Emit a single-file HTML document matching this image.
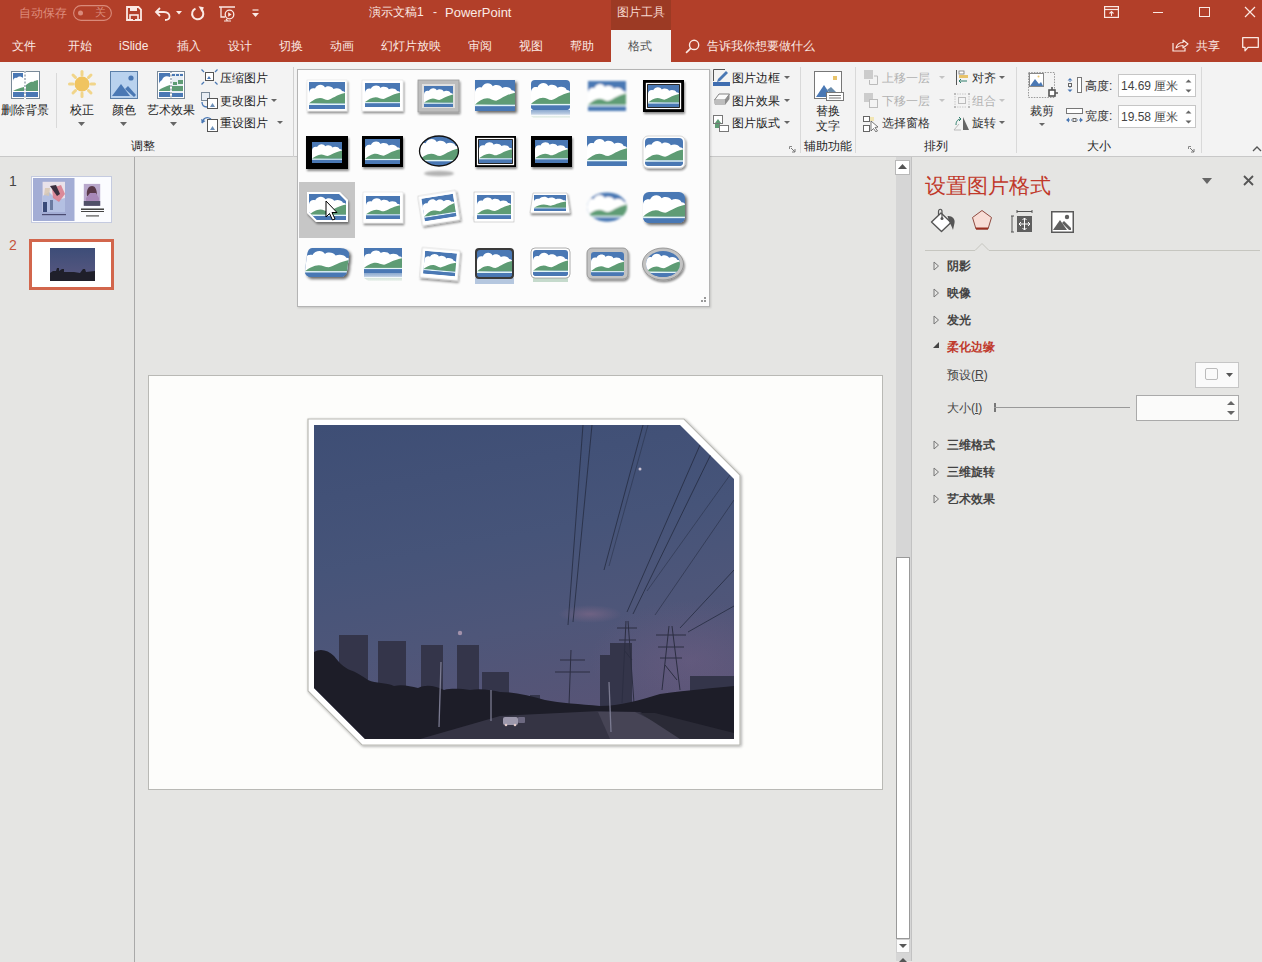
<!DOCTYPE html>
<html><head><meta charset="utf-8">
<style>
*{margin:0;padding:0;box-sizing:border-box}
html,body{width:1262px;height:962px;overflow:hidden;background:#e5e5e3}
body{font-family:"Liberation Sans",sans-serif;font-size:12px;color:#444;position:relative}
.a{position:absolute}
.t{position:absolute;white-space:nowrap;line-height:1}
#title{left:0;top:0;width:1262px;height:62px;background:#b23f29}
#ctx{left:611px;top:0;width:60px;height:30px;background:#9c3a24}
#seltab{left:611px;top:30px;width:60px;height:32px;background:#f3f3f3}
#ribbon{left:0;top:62px;width:1262px;height:95px;background:#f3f3f3;border-bottom:1px solid #c8c8c8}
.tab{color:#fbe9e4;font-size:12px;top:40px}
.rb{color:#1e1e1e;font-size:12px}
.sep{position:absolute;width:1px;background:#d9d9d9}
.gl{color:#1e1e1e;font-size:12px;top:140px}
#leftpane{left:0;top:157px;width:135px;height:805px;background:#e5e5e3;border-right:1px solid #a9a9a9}
#slide{left:149px;top:376px;width:733px;height:413px;background:#fdfdfb;box-shadow:0 0 0 1px #b9b9b5}
#vscroll{left:896px;top:157px;width:16px;height:804px;background:#d6d6d6;border-right:1px solid #c2c2c2}
#rpane{left:912px;top:157px;width:350px;height:805px;background:#e5e5e3}
#gallery{left:297px;top:69px;width:413px;height:238px;background:#fcfcfc;border:1px solid #b4b4b4;box-shadow:1px 1px 2px rgba(0,0,0,.15)}
.sec{font-weight:bold;color:#444;font-size:12px;left:947px}
.tri{position:absolute;left:934px;width:0;height:0;border-top:4px solid transparent;border-bottom:4px solid transparent;border-left:5px solid #777}
.tri::after{content:"";position:absolute;left:-4px;top:-2px;border-top:2px solid transparent;border-bottom:2px solid transparent;border-left:2.5px solid #e6e6e6}
</style></head><body>

<!-- title bar -->
<div id="title" class="a"></div>
<div id="ctx" class="a"></div>
<div id="seltab" class="a"></div>
<div class="t" style="left:19px;top:7px;color:#dd8c7c;font-size:12px">自动保存</div>
<div class="t" style="left:369px;top:6px;color:#fbe9e4;font-size:12px">演示文稿1</div><div class="t" style="left:433px;top:6px;color:#fbe9e4;font-size:12px">-</div><div class="t" style="left:445px;top:6px;color:#fbe9e4;font-size:13px">PowerPoint</div>
<div class="t" style="left:617px;top:6px;color:#f6d8d0;font-size:12px">图片工具</div>

<svg class="a" style="left:73px;top:5px" width="39" height="16" viewBox="0 0 39 16">
<rect x="0.6" y="0.6" width="37.8" height="14.8" rx="7.4" fill="none" stroke="#d98a7a" stroke-width="1.1"/>
<circle cx="7.5" cy="8" r="2.5" fill="#d98a7a"/>
</svg>
<div class="t" style="left:95px;top:7px;color:#d98a7a;font-size:11px">关</div>
<svg class="a" style="left:126px;top:6px" width="16" height="15" viewBox="0 0 16 15">
<path d="M1 1 H12.5 L15 3.5 V14 H1Z" fill="none" stroke="#fbe9e4" stroke-width="1.8"/>
<rect x="4" y="1" width="7" height="4" fill="#fbe9e4"/>
<rect x="4" y="9" width="8" height="5" fill="none" stroke="#fbe9e4" stroke-width="1.6"/>
<rect x="7" y="10" width="2" height="4" fill="#b23f29"/>
</svg>
<svg class="a" style="left:154px;top:6px" width="17" height="15" viewBox="0 0 17 15">
<path d="M2 6 H10 C14 6 15.5 8.5 15.5 10.5 C15.5 12.5 14 14 11 14" fill="none" stroke="#fbe9e4" stroke-width="1.8"/>
<path d="M6 2 L2 6 L6 10" fill="none" stroke="#fbe9e4" stroke-width="1.8"/>
</svg>
<svg class="a" style="left:176px;top:11px" width="6" height="4"><path d="M0 0 H6 L3 3.5Z" fill="#fbe9e4"/></svg>
<svg class="a" style="left:190px;top:6px" width="15" height="15" viewBox="0 0 15 15">
<path d="M5.5 2.6 A5.6 5.6 0 1 0 11.5 3.6" fill="none" stroke="#fbe9e4" stroke-width="2"/>
<path d="M8.5 0.2 L13.8 1.2 L12.2 6.5Z" fill="#fbe9e4"/>
</svg>
<svg class="a" style="left:219px;top:6px" width="17" height="16" viewBox="0 0 17 16">
<path d="M0 1 H16" stroke="#fbe9e4" stroke-width="1.5"/>
<path d="M2 1 V11 H6" stroke="#fbe9e4" stroke-width="1.3" fill="none"/>
<circle cx="10.5" cy="8.5" r="4.3" fill="none" stroke="#fbe9e4" stroke-width="1.3"/>
<path d="M9.2 6.3 V10.7 L12.6 8.5Z" fill="#fbe9e4"/>
<path d="M5 15 H12 M7 13 L8.5 14.5" stroke="#fbe9e4" stroke-width="1.1"/>
</svg>
<svg class="a" style="left:252px;top:9px" width="7" height="9" viewBox="0 0 7 9"><path d="M0.5 1 H6.5" stroke="#fbe9e4" stroke-width="1.2"/><path d="M0 4 H7 L3.5 8Z" fill="#fbe9e4"/></svg>
<svg class="a" style="left:1104px;top:6px" width="15" height="12" viewBox="0 0 15 12">
<rect x="0.6" y="0.6" width="13.8" height="10.8" fill="none" stroke="#fbe9e4" stroke-width="1.2"/>
<path d="M0.6 3.5 H14.4" stroke="#fbe9e4" stroke-width="1.2"/>
<path d="M7.5 10 V5.5 M5.5 7.5 L7.5 5.5 L9.5 7.5" stroke="#fbe9e4" fill="none" stroke-width="1.1"/>
</svg>
<div class="a" style="left:1153px;top:12px;width:10px;height:1.3px;background:#fbe9e4"></div>
<div class="a" style="left:1199px;top:7px;width:11px;height:10px;border:1.2px solid #fbe9e4"></div>
<svg class="a" style="left:1244px;top:6px" width="12" height="12"><path d="M1 1 L11 11 M11 1 L1 11" stroke="#fbe9e4" stroke-width="1.2"/></svg>
<svg class="a" style="left:1172px;top:37px" width="17" height="15" viewBox="0 0 17 15">
<path d="M1 6 V14 H13 V11" fill="none" stroke="#fbe9e4" stroke-width="1.2"/>
<path d="M4 11 C5 7 8 5.5 11 5.5 V3 L16 7 L11 11 V8.5 C8 8.5 6 9.5 4 11Z" fill="none" stroke="#fbe9e4" stroke-width="1.1" stroke-linejoin="round"/>
</svg>
<svg class="a" style="left:1242px;top:37px" width="17" height="15" viewBox="0 0 17 15">
<path d="M0.7 0.7 H16.3 V10.3 H6 L3 13.8 V10.3 H0.7Z" fill="none" stroke="#fbe9e4" stroke-width="1.3" stroke-linejoin="round"/>
</svg>
<svg class="a" style="left:685px;top:39px" width="15" height="15" viewBox="0 0 14 14">
<circle cx="8.5" cy="5.5" r="4.3" fill="none" stroke="#fbe9e4" stroke-width="1.3"/>
<path d="M5.5 8.5 L1 13" stroke="#fbe9e4" stroke-width="1.5"/>
</svg>
<!-- tabs -->
<div class="t tab" style="left:12px">文件</div>
<div class="t tab" style="left:68px">开始</div>
<div class="t tab" style="left:119px">iSlide</div>
<div class="t tab" style="left:177px">插入</div>
<div class="t tab" style="left:228px">设计</div>
<div class="t tab" style="left:279px">切换</div>
<div class="t tab" style="left:330px">动画</div>
<div class="t tab" style="left:381px">幻灯片放映</div>
<div class="t tab" style="left:468px">审阅</div>
<div class="t tab" style="left:519px">视图</div>
<div class="t tab" style="left:570px">帮助</div>
<div class="t tab" style="left:628px;color:#555">格式</div>
<div class="t tab" style="left:707px">告诉我你想要做什么</div>
<div class="t tab" style="left:1196px">共享</div>

<!-- ribbon -->
<div id="ribbon" class="a"></div>
<svg width="0" height="0" style="position:absolute">
<defs>
<symbol id="pic" viewBox="0 0 36 27" preserveAspectRatio="none">
<rect width="36" height="27" fill="#4a78b4"/>
<path d="M0,11 C0,7.5 3,5.5 6,6.5 C8,2 14,1.5 16,5.5 C18,3.5 23,4 24.5,7 C27,5.5 32,6 33,9 C35,9 36,10 36,11 L36,20 L0,22 Z" fill="#fff"/>
<path d="M0,21.5 C3,19 7,16 11,16 C14,16 16,18 19,18 C23,17 27,13 36,11 L36,21.5 Z" fill="#5e9c74"/>
<rect y="21.5" width="36" height="1.5" fill="#e3f5f7"/>
<rect y="23" width="36" height="4" fill="#4a78b4"/>
</symbol>
</defs>
</svg>
<!-- group 调整 -->
<svg class="a" style="left:11px;top:71px" width="29" height="28" viewBox="0 0 29 28">
<rect x="0.5" y="0.5" width="28" height="27" fill="#fff" stroke="#7a8a99"/>
<rect x="2" y="2" width="25" height="24" fill="#fff"/>
<path d="M2,2 H12 V7 C10,5 7,5 6,7 C4,6 2,8 2,10 Z" fill="#4a78b4"/>
<path d="M15,20 L15,14 C18,12 20,10 22,11 C24,9 25,10 27,9 V20 Z" fill="#5e9c74"/>
<path d="M2,20 C5,18 9,17 13,16 V20 Z" fill="#5e9c74"/>
<rect x="2" y="21" width="25" height="5" fill="#4a78b4"/>
<path d="M14 0 V28" stroke="#fff" stroke-width="2"/>
<path d="M14 0 V28" stroke="#6b7b8c" stroke-width="1" stroke-dasharray="2 1.5"/>
</svg>
<div class="t rb" style="left:1px;top:104px">删除背景</div>
<div class="sep" style="left:56px;top:73px;height:55px"></div>
<svg class="a" style="left:68px;top:70px" width="28" height="28" viewBox="0 0 28 28">
<g stroke="#f1d58a" stroke-width="3" stroke-linecap="round">
<path d="M14 1.5 V5"/><path d="M14 23 V26.5"/><path d="M1.5 14 H5"/><path d="M23 14 H26.5"/>
<path d="M5 5 L7.5 7.5"/><path d="M20.5 20.5 L23 23"/><path d="M23 5 L20.5 7.5"/><path d="M5 23 L7.5 20.5"/>
</g>
<circle cx="14" cy="14" r="7.5" fill="#f0c460"/>
</svg>
<div class="t rb" style="left:70px;top:104px">校正</div>
<svg class="a" style="left:78px;top:122px" width="7" height="4"><path d="M0 0 H7 L3.5 4Z" fill="#666"/></svg>
<svg class="a" style="left:110px;top:71px" width="28" height="28" viewBox="0 0 28 28">
<rect x="0.5" y="0.5" width="27" height="27" fill="#b9d2ee" stroke="#5b7fa8"/>
<circle cx="21" cy="7" r="2.6" fill="#4a78b4"/>
<path d="M2,25 L11,13 L20,25 Z" fill="#4a78b4"/>
<path d="M15,18 L18,15 L26,24 L24,26 Z" fill="#4a78b4"/>
</svg>
<div class="t rb" style="left:112px;top:104px">颜色</div>
<svg class="a" style="left:120px;top:122px" width="7" height="4"><path d="M0 0 H7 L3.5 4Z" fill="#666"/></svg>
<svg class="a" style="left:157px;top:71px" width="28" height="28" viewBox="0 0 28 28">
<rect x="0.5" y="0.5" width="27" height="27" fill="#fff" stroke="#7a8a99"/>
<path d="M2,2 H13 V6 C9,4 6,6 5,9 C3,10 2,12 2,13 Z" fill="#4a78b4"/>
<path d="M2,19 C5,17 9,15 13,14 V20 H2 Z" fill="#5e9c74"/>
<rect x="2" y="21" width="11" height="5" fill="#4a78b4"/>
<rect x="15" y="2" width="11" height="24" fill="#e8eef3"/>
<g fill="#4a78b4"><rect x="15" y="3" width="3" height="2"/><rect x="19" y="3" width="3" height="2"/><rect x="23" y="3" width="3" height="2"/><rect x="15" y="22" width="11" height="4"/></g>
<g fill="#5e9c74"><rect x="16" y="11" width="4" height="3"/><rect x="21" y="9" width="5" height="4"/><rect x="15" y="15" width="11" height="5"/></g>
<path d="M14 0 V28" stroke="#6b7b8c" stroke-width="1" stroke-dasharray="2 1.5"/>
</svg>
<div class="t rb" style="left:147px;top:104px">艺术效果</div>
<svg class="a" style="left:170px;top:122px" width="7" height="4"><path d="M0 0 H7 L3.5 4Z" fill="#666"/></svg>
<!-- small buttons -->
<svg class="a" style="left:201px;top:69px" width="17" height="16" viewBox="0 0 17 16">
<rect x="4.5" y="3.5" width="8" height="8" fill="#fff" stroke="#555"/>
<path d="M6 10 L8 7 L10 10Z" fill="#4a78b4"/>
<g stroke="#4a78b4" stroke-width="1.2"><path d="M0.5 0.5 L3 3"/><path d="M16.5 0.5 L14 3"/><path d="M0.5 15.5 L3 13"/><path d="M16.5 15.5 L14 13"/></g>
</svg>
<div class="t rb" style="left:220px;top:72px">压缩图片</div>
<svg class="a" style="left:201px;top:92px" width="17" height="17" viewBox="0 0 17 17">
<rect x="0.5" y="0.5" width="8" height="8" fill="#e9eef4" stroke="#7a8a99"/>
<rect x="6.5" y="6.5" width="10" height="10" fill="#fff" stroke="#555"/>
<path d="M9 15 L11.5 11 L14 15Z" fill="#6c8fb8"/>
<path d="M1 10 C1 14 3 15 6 15" stroke="#4a78b4" fill="none" stroke-width="1.3"/>
</svg>
<div class="t rb" style="left:220px;top:95px">更改图片</div>
<svg class="a" style="left:271px;top:99px" width="6" height="3"><path d="M0 0 H6 L3 3Z" fill="#666"/></svg>
<svg class="a" style="left:201px;top:115px" width="17" height="17" viewBox="0 0 17 17">
<rect x="6.5" y="4.5" width="10" height="12" fill="#fff" stroke="#555"/>
<path d="M9 15 L11.5 11 L14 15Z" fill="#6c8fb8"/>
<path d="M1 8 C2 3 6 1 10 4" stroke="#4a78b4" fill="none" stroke-width="1.3"/>
<path d="M0 4 L1 8.5 L4.5 6Z" fill="#4a78b4"/>
</svg>
<div class="t rb" style="left:220px;top:117px">重设图片</div>
<svg class="a" style="left:277px;top:121px" width="6" height="3"><path d="M0 0 H6 L3 3Z" fill="#666"/></svg>
<div class="t gl" style="left:131px">调整</div>
<div class="sep" style="left:293px;top:67px;height:90px;background:#d0d0d0"></div>

<!-- 图片样式 right part -->
<svg class="a" style="left:713px;top:69px" width="17" height="17" viewBox="0 0 17 17">
<path d="M0.5 12 V0.5 H12" stroke="#555" fill="none"/>
<path d="M5 10 L13 2 L15 4 L7 12 L4 13Z" fill="#4a78b4"/>
<rect x="0" y="13" width="17" height="4" fill="#3f6db0"/>
</svg>
<div class="t rb" style="left:732px;top:72px">图片边框</div>
<svg class="a" style="left:784px;top:76px" width="6" height="3"><path d="M0 0 H6 L3 3Z" fill="#666"/></svg>
<svg class="a" style="left:713px;top:92px" width="18" height="15" viewBox="0 0 18 15">
<path d="M1.5 8 L6 2 H16.5 L12 8Z" fill="#fafafa" stroke="#777" stroke-width="0.9" stroke-linejoin="round"/>
<path d="M1.5 8 L12 8 L16.5 2 L16.5 7 L12 13 H3.5 Q1.5 13 1.5 11Z" fill="#8c8c8c"/>
<path d="M1.5 8 H12 V13 H3.5 Q1.5 13 1.5 11Z" fill="#bdbdbd"/>
</svg>
<div class="t rb" style="left:732px;top:95px">图片效果</div>
<svg class="a" style="left:784px;top:99px" width="6" height="3"><path d="M0 0 H6 L3 3Z" fill="#666"/></svg>
<svg class="a" style="left:713px;top:115px" width="16" height="17" viewBox="0 0 16 17">
<rect x="0.5" y="0.5" width="9" height="8" fill="#fff" stroke="#777"/>
<path d="M2 8 L5 4 L8 8Z" fill="#5e9c74"/>
<rect x="2" y="9" width="5" height="4" fill="#5e9c74"/>
<rect x="6.5" y="10.5" width="9" height="6" fill="#fff" stroke="#777"/>
</svg>
<div class="t rb" style="left:732px;top:117px">图片版式</div>
<svg class="a" style="left:784px;top:121px" width="6" height="3"><path d="M0 0 H6 L3 3Z" fill="#666"/></svg>
<svg class="a" style="left:789px;top:146px" width="7" height="7" viewBox="0 0 7 7"><path d="M0.5 3 V0.5 H3" stroke="#888" fill="none"/><path d="M2 2 L6 6 M6 3 V6 H3" stroke="#777" fill="none"/></svg>
<div class="sep" style="left:800px;top:67px;height:86px"></div>
<!-- 替换文字 -->
<svg class="a" style="left:814px;top:71px" width="30" height="30" viewBox="0 0 30 30">
<rect x="0.5" y="0.5" width="27" height="27" fill="#fff" stroke="#777"/>
<circ cx="21" cy="7" r="2"/>
<rect x="19" y="5" width="4" height="4" fill="#e8c36a"/>
<path d="M2,26 L10,14 L18,26Z" fill="#4a78b4"/>
<path d="M13,19 L17,16 L22,21 L20,26Z" fill="#6b8cab"/>
<rect x="12.5" y="21.5" width="17" height="8" fill="#fff" stroke="#777"/>
<path d="M15 24.5 H27 M15 27 H27" stroke="#777"/>
</svg>
<div class="t rb" style="left:816px;top:105px">替换</div>
<div class="t rb" style="left:816px;top:120px">文字</div>
<div class="t gl" style="left:804px">辅助功能</div>
<div class="sep" style="left:855px;top:67px;height:86px"></div>
<!-- 排列 -->
<svg class="a" style="left:864px;top:70px" width="14" height="15" viewBox="0 0 14 15">
<rect x="0" y="0" width="9" height="9" fill="#ccc"/>
<path d="M5.5 10 V14.5 H13.5 V6 H10" stroke="#bbb" fill="none"/>
</svg>
<div class="t rb" style="left:882px;top:72px;color:#b1b1b1">上移一层</div>
<svg class="a" style="left:939px;top:76px" width="6" height="3"><path d="M0 0 H6 L3 3Z" fill="#c4c4c4"/></svg>
<svg class="a" style="left:864px;top:93px" width="14" height="15" viewBox="0 0 14 15">
<rect x="0" y="0" width="9" height="9" fill="#ccc"/>
<rect x="5.5" y="6.5" width="8" height="8" fill="#f3f3f3" stroke="#bbb"/>
</svg>
<div class="t rb" style="left:882px;top:95px;color:#b1b1b1">下移一层</div>
<svg class="a" style="left:939px;top:99px" width="6" height="3"><path d="M0 0 H6 L3 3Z" fill="#c4c4c4"/></svg>
<svg class="a" style="left:863px;top:116px" width="16" height="16" viewBox="0 0 16 16">
<rect x="0.5" y="0.5" width="6" height="5" fill="#fff" stroke="#666"/>
<rect x="0.5" y="9.5" width="6" height="6" fill="#fff" stroke="#666"/>
<rect x="7" y="1" width="4" height="4" fill="#f2e6b4"/>
<path d="M8 5 L8 15 L10.5 12.5 L13 16 L14.5 15 L12 11.5 L15 11Z" fill="#fff" stroke="#555" stroke-width="0.8"/>
</svg>
<div class="t rb" style="left:882px;top:117px;color:#333">选择窗格</div>
<svg class="a" style="left:956px;top:70px" width="12" height="15" viewBox="0 0 12 15">
<path d="M0.5 0 V15" stroke="#555"/>
<rect x="3" y="1" width="5" height="3" fill="#fff" stroke="#777" stroke-width="0.8"/>
<rect x="3" y="5" width="9" height="3" fill="#e8c36a"/>
<path d="M11 11 H3 M5 9 L3 11 L5 13" stroke="#2e7d6b" fill="none"/>
</svg>
<div class="t rb" style="left:972px;top:72px;color:#333">对齐</div>
<svg class="a" style="left:999px;top:76px" width="6" height="3"><path d="M0 0 H6 L3 3Z" fill="#666"/></svg>
<svg class="a" style="left:954px;top:93px" width="16" height="15" viewBox="0 0 16 15">
<g fill="#bbb"><rect x="0" y="0" width="2" height="2"/><rect x="14" y="0" width="2" height="2"/><rect x="0" y="13" width="2" height="2"/><rect x="14" y="13" width="2" height="2"/></g>
<path d="M1 3 V12 M15 3 V12 M3 1 H13 M3 14 H13" stroke="#c8c8c8" stroke-dasharray="1.5 1"/>
<rect x="4.5" y="4.5" width="7" height="6" fill="none" stroke="#bbb"/>
</svg>
<div class="t rb" style="left:972px;top:95px;color:#b1b1b1">组合</div>
<svg class="a" style="left:999px;top:99px" width="6" height="3"><path d="M0 0 H6 L3 3Z" fill="#c4c4c4"/></svg>
<svg class="a" style="left:953px;top:116px" width="17" height="15" viewBox="0 0 17 15">
<path d="M10 1 L16 14 H10Z" fill="#666"/>
<path d="M1 14 L6 8" stroke="#bbb"/>
<path d="M3 9 C3 5 5 3 8 3 M6 1 L8 3 L6 5" stroke="#2e7d6b" fill="none"/>
<path d="M1 14 H8" stroke="#bbb"/>
</svg>
<div class="t rb" style="left:972px;top:117px;color:#333">旋转</div>
<svg class="a" style="left:999px;top:121px" width="6" height="3"><path d="M0 0 H6 L3 3Z" fill="#666"/></svg>
<div class="t gl" style="left:924px">排列</div>
<div class="sep" style="left:1016px;top:67px;height:86px"></div>
<!-- 大小 -->
<svg class="a" style="left:1028px;top:72px" width="31" height="28" viewBox="0 0 31 28">
<rect x="0.5" y="0.5" width="26" height="25" fill="none" stroke="#999" stroke-dasharray="1.5 1.2"/>
<rect x="1.5" y="1.5" width="14" height="13" fill="#fff" stroke="#888"/>
<path d="M2 14 L7 7 L11 12 L13 10 L15 14Z" fill="#4a78b4"/>
<circle cx="10.5" cy="4.5" r="1" fill="#e8c36a"/>
<rect x="21" y="18" width="6" height="6" fill="#fff" stroke="#555" stroke-width="1.6"/>
<path d="M24 15 V18 M30 21 H27" stroke="#555" stroke-width="1.6"/>
</svg>
<div class="t rb" style="left:1030px;top:105px;color:#333">裁剪</div>
<svg class="a" style="left:1039px;top:123px" width="6" height="3"><path d="M0 0 H6 L3 3Z" fill="#666"/></svg>
<svg class="a" style="left:1066px;top:77px" width="17" height="16" viewBox="0 0 17 16">
<path d="M4 1 L1.5 3.5 H6.5Z M4 15 L1.5 12.5 H6.5Z" fill="#4a78b4"/>
<path d="M4 4 V6 M4 10 V12" stroke="#4a78b4" stroke-dasharray="1 1"/>
<rect x="2.5" y="6.5" width="3" height="3" fill="none" stroke="#666"/>
<rect x="11.5" y="0.5" width="4" height="15" fill="#fff" stroke="#777"/>
</svg>
<div class="t rb" style="left:1085px;top:80px;color:#333">高度:</div>
<div class="a" style="left:1118px;top:74px;width:78px;height:23px;background:#fff;border:1px solid #c6c6c6"></div>
<div class="t rb" style="left:1121px;top:80px;color:#444;font-size:12px">14.69 厘米</div>
<svg class="a" style="left:1185px;top:79px" width="7" height="14"><path d="M0.5 3.5 L3.5 0.5 L6.5 3.5Z M0.5 10.5 L3.5 13.5 L6.5 10.5Z" fill="#666"/></svg>
<svg class="a" style="left:1066px;top:108px" width="17" height="17" viewBox="0 0 17 17">
<rect x="0.5" y="0.5" width="16" height="5" fill="#fff" stroke="#777"/>
<path d="M0 12 L3 9.5 V14.5Z M17 12 L14 9.5 V14.5Z" fill="#4a78b4"/>
<path d="M3 12 H6 M11 12 H14" stroke="#4a78b4" stroke-dasharray="1 1"/>
<rect x="7" y="10.5" width="3" height="3" fill="none" stroke="#666"/>
</svg>
<div class="t rb" style="left:1085px;top:110px;color:#333">宽度:</div>
<div class="a" style="left:1118px;top:105px;width:78px;height:23px;background:#fff;border:1px solid #c6c6c6"></div>
<div class="t rb" style="left:1121px;top:111px;color:#444;font-size:12px">19.58 厘米</div>
<svg class="a" style="left:1185px;top:110px" width="7" height="14"><path d="M0.5 3.5 L3.5 0.5 L6.5 3.5Z M0.5 10.5 L3.5 13.5 L6.5 10.5Z" fill="#666"/></svg>
<div class="t gl" style="left:1087px">大小</div>
<svg class="a" style="left:1188px;top:146px" width="7" height="7" viewBox="0 0 7 7"><path d="M0.5 3 V0.5 H3" stroke="#888" fill="none"/><path d="M2 2 L6 6 M6 3 V6 H3" stroke="#777" fill="none"/></svg>
<div class="sep" style="left:1201px;top:67px;height:86px"></div>
<svg class="a" style="left:1252px;top:146px" width="10" height="6"><path d="M1 5 L5 1 L9 5" stroke="#555" fill="none" stroke-width="1.3"/></svg>

<!-- left pane -->
<div id="leftpane" class="a"></div>
<div class="t" style="left:9px;top:174px;font-size:14px;color:#444">1</div>
<div class="t" style="left:9px;top:238px;font-size:14px;color:#c5533c">2</div>
<svg class="a" style="left:31px;top:176px" width="81" height="47" viewBox="0 0 81 47">
<rect x="0.5" y="0.5" width="80" height="46" fill="#fbfcff" stroke="#c5cbe0"/>
<rect x="2" y="2" width="41.5" height="43" fill="#a3add5"/>
<rect x="11.6" y="5.8" width="22.4" height="30.2" fill="#e9e2ea"/>
<path d="M11.6,20 L18,16 L26,24 L34,22 V36 H11.6Z" fill="#b4c0e2"/>
<path d="M21,12 L30,9 L34,18 L28,26 L22,22Z" fill="#d97f90" opacity="0.9"/>
<path d="M19,10 L25,9 L29,18 L26,20Z" fill="#3a2f3f"/>
<path d="M14,12 L19,12 L18,20 L13,19Z" fill="#d7c7b0" opacity="0.8"/>
<rect x="12" y="26" width="4" height="10" fill="#3a4a78"/>
<rect x="19" y="24" width="3" height="10" fill="#6a7aa0"/>
<rect x="11" y="38" width="24" height="1.2" fill="#4a4a70"/>
<rect x="52.8" y="7.9" width="16.4" height="21.9" fill="#b9a8cc"/>
<path d="M56,20 C55,13 58,10 61,10 C64,10 66,13 66,20Z" fill="#5a3a4a"/>
<path d="M55,22 L59,17 L65,17 L68,22 V29.8 H55Z" fill="#a888b8"/>
<rect x="52.8" y="25" width="16.4" height="4.8" fill="#505068"/>
<rect x="50" y="32.5" width="23" height="1.4" fill="#333"/>
<rect x="50" y="35" width="23" height="1" fill="#444"/>
<rect x="55" y="39.3" width="13" height="1.2" fill="#555"/>
</svg>
<div class="a" style="left:29px;top:239px;width:85px;height:51px;border:3px solid #d2664c;background:#fff"></div>
<svg class="a" style="left:50px;top:248px" width="45" height="33" viewBox="0 0 45 33">
<defs><linearGradient id="tsky" x1="0" y1="0" x2="0" y2="1"><stop offset="0" stop-color="#3d4d78"/><stop offset="1" stop-color="#5a5880"/></linearGradient></defs>
<rect width="45" height="33" fill="url(#tsky)"/>
<path d="M0,25 L3,23 L6,23 L7,20 L9,20 L9,23 L12,21 L14,21 L14,24 L24,24 L30,25 L33,21 L35,21 L36,24 L45,23 V33 H0Z" fill="#1f1f2a"/>
</svg>
<!-- slide -->
<div id="slide" class="a"></div>
<svg class="a" style="left:300px;top:411px" width="450" height="345" viewBox="300 411 450 345">
<defs>
<linearGradient id="sky" x1="0" y1="0" x2="0.25" y2="1">
<stop offset="0" stop-color="#3e4e75"/>
<stop offset="0.45" stop-color="#465479"/>
<stop offset="0.72" stop-color="#4e5679"/>
<stop offset="1" stop-color="#575476"/>
</linearGradient>
<radialGradient id="pink" cx="0.5" cy="0.5" r="0.5"><stop offset="0" stop-color="#9a7291" stop-opacity="0.7"/><stop offset="1" stop-color="#9a7291" stop-opacity="0"/></radialGradient>
<radialGradient id="purp" cx="0.5" cy="0.5" r="0.5"><stop offset="0" stop-color="#7a6288" stop-opacity="0.8"/><stop offset="1" stop-color="#7a6288" stop-opacity="0"/></radialGradient>
<clipPath id="photo"><path d="M314,425 H680 L734,479 V739 H365 L314,688Z"/></clipPath>
<filter id="fsh" x="-5%" y="-5%" width="110%" height="110%"><feGaussianBlur in="SourceAlpha" stdDeviation="1.5"/><feOffset dx="0.5" dy="1"/><feComponentTransfer><feFuncA type="linear" slope="0.35"/></feComponentTransfer><feMerge><feMergeNode/><feMergeNode in="SourceGraphic"/></feMerge></filter>
</defs>
<path d="M308,419 H684 L740,475 V745 H362 L308,691Z" fill="#fff" stroke="#b9b9b4" stroke-width="1.2" filter="url(#fsh)"/>
<g clip-path="url(#photo)">
<rect x="314" y="425" width="420" height="314" fill="url(#sky)"/>
<ellipse cx="690" cy="660" rx="100" ry="60" fill="url(#purp)" opacity="0.45"/>
<ellipse cx="590" cy="614" rx="32" ry="9" fill="url(#pink)" opacity="0.6"/>
<!-- power lines -->
<g stroke="#262c42" stroke-width="0.9" fill="none" opacity="0.9">
<path d="M583,425 L568,625"/>
<path d="M592,425 L573,622"/>
<path d="M643,425 L604,570"/>
<path d="M648,425 L609,566" opacity="0.6"/>
<path d="M730,475 L647,591" opacity="0.6"/>
<path d="M700,445 L627,612"/>
<path d="M712,452 L633,614"/>
<path d="M734,500 L655,615" opacity="0.7"/>
<path d="M734,606 L688,632"/>
<path d="M734,570 L680,628"/>
</g>
<!-- buildings -->
<g fill="#34354a">
<rect x="339" y="635" width="29" height="70"/>
<rect x="378" y="641" width="28" height="65"/>
<rect x="421" y="645" width="22" height="65"/>
<rect x="457" y="645" width="22" height="65"/>
<rect x="482" y="672" width="27" height="40"/>
<rect x="600" y="655" width="12" height="55"/>
<rect x="610" y="643" width="22" height="67"/>
<rect x="530" y="695" width="10" height="15"/>
<rect x="690" y="676" width="44" height="30"/>
</g>
<!-- pylons -->
<g stroke="#2c2e42" stroke-width="1" fill="none">
<path d="M626,621 L622,703 M628,621 L634,703 M617,628 H637 M619,640 H636 M624,650 L632,660"/>
<path d="M669,626 L662,690 M672,626 L680,690 M656,635 H686 M658,647 H684 M660,658 H682 M665,665 L677,680"/>
<path d="M571,650 L569,705 M560,660 H585 M555,672 H590"/>
</g>
<!-- trees / ground -->
<path d="M314,652 C320,648 328,650 334,656 C340,664 345,668 350,670 C356,672 362,676 368,680 C376,684 386,682 394,686 C402,684 410,686 418,688 C426,684 436,686 444,690 C452,688 462,689 470,690 C480,688 492,690 500,692 C515,692 530,696 545,700 C560,703 580,704 600,706 C620,706 640,700 660,694 C690,690 715,688 734,686 V739 H314Z" fill="#1d1d28"/>
<!-- road -->
<path d="M420,739 L500,716 L600,711 L640,712 L700,739Z" fill="#353444"/>
<path d="M610,739 L598,712 L635,712 L690,739Z" fill="#464455"/>
<path d="M680,739 L640,713 L655,713 L734,733 V739Z" fill="#2a2a36"/>
<!-- poles -->
<g stroke="#7a7a90" stroke-width="1.3"><path d="M439,727 L441,662"/><path d="M611,732 L609,682"/><path d="M491,721 L491,690"/></g>
<!-- lights -->
<circle cx="640" cy="469" r="1.5" fill="#c8c0d0"/>
<circle cx="460" cy="633" r="2.2" fill="#b8a0b8" opacity="0.8"/>
<rect x="503" y="717" width="15" height="8" rx="2" fill="#9c98ac"/>
<rect x="518" y="717" width="7" height="6" rx="1" fill="#6c6880"/>
<circle cx="506" cy="725" r="1.3" fill="#e0c8c8"/><circle cx="515" cy="725" r="1.3" fill="#e0c8c8"/>
</g>
</svg>
<div id="vscroll" class="a"></div>
<div class="a" style="left:895px;top:160px;width:15px;height:15px;background:#fff;border:1px solid #b9b9b9"></div>
<svg class="a" style="left:898px;top:164px" width="9" height="5"><path d="M0 5 L4.5 0 L9 5Z" fill="#555"/></svg>
<div class="a" style="left:896px;top:557px;width:14px;height:382px;background:#fff;border:1px solid #999"></div>
<div class="a" style="left:896px;top:939px;width:14px;height:14px;background:#fcfcfc;border:1px solid #cfcfcf"></div>
<svg class="a" style="left:899px;top:944px" width="8" height="4"><path d="M0 0 L4 4 L8 0Z" fill="#555"/></svg>
<svg class="a" style="left:899px;top:958px" width="8" height="4"><path d="M0 4 L4 0 L8 4Z" fill="#555"/></svg>
<div id="rpane" class="a"></div>
<div class="t" style="left:925px;top:175px;font-size:21px;color:#c0392b">设置图片格式</div>
<svg class="a" style="left:1202px;top:178px" width="10" height="6"><path d="M0 0 H10 L5 6Z" fill="#666"/></svg>
<svg class="a" style="left:1243px;top:175px" width="11" height="11"><path d="M1 1 L10 10 M10 1 L1 10" stroke="#555" stroke-width="1.8"/></svg>
<!-- pane icons -->
<svg class="a" style="left:930px;top:208px" width="26" height="25" viewBox="0 0 26 25">
<path d="M1.5,14 L11,5 L21,14.5 L11.5,23.5Z" fill="#fff" stroke="#555" stroke-width="1.4" stroke-linejoin="round"/>
<path d="M8.5,7 V3.5 C8.5,0.5 12,0.5 12,3.5 V10" stroke="#555" fill="none" stroke-width="1.2"/>
<circle cx="12" cy="10.5" r="1.5" fill="#555"/>
<path d="M17.5,8 C22,7.5 25.5,11 24.5,15 C24,17 23.5,20 23,22 C22,19 20.5,16 19,13.5Z" fill="#555"/>
</svg>
<svg class="a" style="left:971px;top:209px" width="22" height="24" viewBox="0 0 22 24">
<path d="M11,1.5 L20.5,8.5 L17,20 H5 L1.5,8.5Z" fill="#f8ddd6" stroke="#8f4a40" stroke-width="1" stroke-linejoin="round"/>
<path d="M5,19.5 H17" stroke="#9a2e20" stroke-width="2"/>
</svg>
<svg class="a" style="left:1011px;top:210px" width="22" height="23" viewBox="0 0 22 23">
<path d="M6 1.5 H21 M6 0 V3 M21 0 V3" stroke="#555"/>
<path d="M1 6 V22 M0 6 H3 M0 22 H3" stroke="#555"/>
<rect x="6" y="6" width="15" height="16" fill="#5f5f5f"/>
<path d="M13.5 8 V20 M8 14 H19" stroke="#fff" stroke-width="1"/>
<path d="M11.5 10 L13.5 8 L15.5 10 M11.5 18 L13.5 20 L15.5 18 M10 12 L8 14 L10 16 M17 12 L19 14 L17 16" stroke="#fff" fill="none" stroke-width="1"/>
</svg>
<svg class="a" style="left:1051px;top:211px" width="23" height="22" viewBox="0 0 23 22">
<rect x="0.75" y="0.75" width="21.5" height="20.5" fill="#fff" stroke="#5a5a5a" stroke-width="1.5"/>
<circle cx="16" cy="6" r="2.2" fill="#5f5f5f"/>
<path d="M2,19 L9,9 L16,19Z" fill="#5f5f5f"/>
<path d="M11,12 L13,10 L20,17 L20,19 L18,19Z" fill="#5f5f5f"/>
</svg>
<svg class="a" style="left:925px;top:242px" width="335" height="10" viewBox="0 0 335 10">
<path d="M0 8.5 H50 L57 1.5 L64 8.5 H335" stroke="#c6c6c0" fill="none"/>
</svg>
<!-- sections -->
<svg class="a" style="left:933px;top:261px" width="7" height="10"><path d="M1 1 L5.5 5 L1 9Z" fill="none" stroke="#777" stroke-width="1"/></svg><div class="t sec" style="top:260px">阴影</div>
<svg class="a" style="left:933px;top:288px" width="7" height="10"><path d="M1 1 L5.5 5 L1 9Z" fill="none" stroke="#777" stroke-width="1"/></svg><div class="t sec" style="top:287px">映像</div>
<svg class="a" style="left:933px;top:315px" width="7" height="10"><path d="M1 1 L5.5 5 L1 9Z" fill="none" stroke="#777" stroke-width="1"/></svg><div class="t sec" style="top:314px">发光</div>
<svg class="a" style="left:933px;top:342px" width="7" height="7"><path d="M6 0 V6 H0Z" fill="#444"/></svg>
<div class="t sec" style="top:341px;color:#c0392b">柔化边缘</div>
<div class="t" style="left:947px;top:369px;color:#444;font-size:12px">预设(<u>R</u>)</div>
<div class="a" style="left:1195px;top:362px;width:44px;height:26px;background:#fafafa;border:1px solid #c6c6c6"></div>
<div class="a" style="left:1205px;top:368px;width:13px;height:12px;border:1.5px solid #bbb;border-radius:2px;background:#fafafa"></div>
<svg class="a" style="left:1226px;top:373px" width="7" height="4"><path d="M0 0 H7 L3.5 4Z" fill="#555"/></svg>
<div class="t" style="left:947px;top:402px;color:#444;font-size:12px">大小(<u>I</u>)</div>
<div class="a" style="left:994px;top:403px;width:1.5px;height:9px;background:#777"></div>
<div class="a" style="left:994px;top:407px;width:136px;height:1px;background:#999"></div>
<div class="a" style="left:1136px;top:395px;width:103px;height:26px;background:#fbfbfa;border:1px solid #aaa"></div>
<svg class="a" style="left:1227px;top:401px" width="8" height="14"><path d="M0 4 L4 0 L8 4Z M0 10 L4 14 L8 10Z" fill="#666"/></svg>
<svg class="a" style="left:933px;top:440px" width="7" height="10"><path d="M1 1 L5.5 5 L1 9Z" fill="none" stroke="#777" stroke-width="1"/></svg><div class="t sec" style="top:439px">三维格式</div>
<svg class="a" style="left:933px;top:467px" width="7" height="10"><path d="M1 1 L5.5 5 L1 9Z" fill="none" stroke="#777" stroke-width="1"/></svg><div class="t sec" style="top:466px">三维旋转</div>
<svg class="a" style="left:933px;top:494px" width="7" height="10"><path d="M1 1 L5.5 5 L1 9Z" fill="none" stroke="#777" stroke-width="1"/></svg><div class="t sec" style="top:493px">艺术效果</div>

<!-- gallery -->
<div id="gallery" class="a"></div>
<svg class="a" style="left:297px;top:69px" width="413" height="237" viewBox="297 69 413 237">
<defs>
<filter id="sh" x="-30%" y="-30%" width="160%" height="160%"><feGaussianBlur in="SourceAlpha" stdDeviation="1.2"/><feOffset dx="1" dy="1.5"/><feComponentTransfer><feFuncA type="linear" slope="0.45"/></feComponentTransfer><feMerge><feMergeNode/><feMergeNode in="SourceGraphic"/></feMerge></filter>
<filter id="sh2" x="-30%" y="-30%" width="160%" height="160%"><feGaussianBlur in="SourceAlpha" stdDeviation="1.6"/><feOffset dx="1.5" dy="2"/><feComponentTransfer><feFuncA type="linear" slope="0.6"/></feComponentTransfer><feMerge><feMergeNode/><feMergeNode in="SourceGraphic"/></feMerge></filter>
<filter id="soft" x="-20%" y="-20%" width="140%" height="140%"><feGaussianBlur stdDeviation="1.1"/></filter>
<filter id="soft2" x="-20%" y="-20%" width="140%" height="140%"><feGaussianBlur stdDeviation="0.7"/></filter>
<filter id="blur2"><feGaussianBlur stdDeviation="1.5"/></filter>
<linearGradient id="refl" x1="0" y1="0" x2="0" y2="1"><stop offset="0" stop-color="#fcfcfc" stop-opacity="0.1"/><stop offset="1" stop-color="#fcfcfc" stop-opacity="1"/></linearGradient>
<clipPath id="ov1"><ellipse cx="439" cy="151" rx="19.5" ry="15"/></clipPath>
<clipPath id="ov2"><ellipse cx="607" cy="207" rx="20" ry="14.5"/></clipPath>
<clipPath id="ov3"><ellipse cx="663" cy="264" rx="17" ry="13"/></clipPath>
<clipPath id="rr5"><rect x="531" y="80" width="39" height="30" rx="4"/></clipPath>
<clipPath id="rr5r"><rect x="531" y="110" width="39" height="8"/></clipPath><clipPath id="r42r"><rect x="364" y="273" width="38" height="8"/></clipPath>
<clipPath id="rr27"><rect x="645" y="138" width="38" height="28" rx="4"/></clipPath>
<clipPath id="rr37"><rect x="643" y="192" width="42" height="31" rx="6"/></clipPath>
<clipPath id="rr44"><rect x="477" y="250" width="35" height="27" rx="3"/></clipPath>
<clipPath id="rr45"><rect x="533" y="250" width="35" height="26" rx="3"/></clipPath>
<clipPath id="rr46"><rect x="591" y="252" width="33" height="24" rx="3"/></clipPath>
<clipPath id="snip"><path d="M309,194 H339 L346,201 V220 H317 L309,212Z"/></clipPath>
<clipPath id="bev41"><path d="M312,248 H340 Q350,248 349,256 L347,271 Q346,277 340,277 H312 Q305,277 305,271 L307,255 Q308,248 312,248Z"/></clipPath>
</defs>
<!-- row 1 -->
<g filter="url(#sh)"><rect x="307" y="80" width="40" height="31" fill="#fff" stroke="#ddd" stroke-width="0.5"/></g>
<use href="#pic" x="309" y="82" width="36" height="27"/>
<g filter="url(#sh)"><rect x="362" y="80" width="41" height="31" fill="#fff" stroke="#ddd" stroke-width="0.5"/></g>
<use href="#pic" x="365" y="83" width="35" height="24"/>
<g filter="url(#sh)"><rect x="418" y="80" width="41" height="32" fill="#bdbdbd" stroke="#9a9a9a" stroke-width="0.8"/></g>
<rect x="422" y="84" width="33" height="24" fill="#e0e0e0"/>
<use href="#pic" x="424" y="86" width="29" height="21"/>
<g filter="url(#sh2)"><use href="#pic" x="475" y="80" width="40" height="31"/></g>
<g opacity="0.7"><g clip-path="url(#rr5r)"><g transform="translate(0,220) scale(1,-1)"><use href="#pic" x="531" y="80" width="39" height="30"/></g></g></g>
<rect x="530" y="110" width="41" height="9" fill="url(#refl)"/>
<g clip-path="url(#rr5)"><use href="#pic" x="531" y="80" width="39" height="30"/></g>
<g filter="url(#soft)"><use href="#pic" x="588" y="81" width="38" height="30"/></g>
<g filter="url(#sh)"><rect x="643" y="80" width="41" height="32" fill="#000"/></g>
<rect x="646.5" y="83.5" width="34" height="25" fill="none" stroke="#fff" stroke-width="1.3"/>
<use href="#pic" x="648" y="85" width="31" height="22"/>
<!-- row 2 -->
<g filter="url(#sh)"><rect x="306" y="136" width="42" height="33" fill="#000"/></g>
<use href="#pic" x="312" y="142" width="30" height="21"/>
<g filter="url(#sh)"><rect x="362" y="136" width="41" height="31" fill="#000"/></g>
<use href="#pic" x="365" y="139" width="35" height="25"/>
<ellipse cx="439" cy="173.5" rx="15" ry="2.8" fill="#b4b4b4" filter="url(#soft)"/>
<g clip-path="url(#ov1)"><use href="#pic" x="419" y="136" width="40" height="30"/></g>
<ellipse cx="439" cy="151" rx="19.5" ry="15" fill="none" stroke="#111" stroke-width="1.3"/>
<g filter="url(#sh)"><rect x="475" y="136" width="41" height="31" fill="#000"/></g>
<rect x="477.5" y="138.5" width="36" height="26" fill="none" stroke="#fff" stroke-width="1.3"/>
<use href="#pic" x="479" y="140" width="33" height="23"/>
<g filter="url(#sh)"><rect x="531" y="136" width="41" height="31" fill="#000"/></g>
<use href="#pic" x="535" y="140" width="33" height="23"/>
<g filter="url(#soft2)"><use href="#pic" x="587" y="136" width="40" height="30"/></g>
<g filter="url(#sh)"><rect x="643" y="136" width="42" height="32" rx="5" fill="#fff" stroke="#ccc" stroke-width="0.8"/></g>
<g clip-path="url(#rr27)"><use href="#pic" x="645" y="138" width="38" height="28"/></g>
<!-- row 3 -->
<rect x="299" y="182" width="56" height="56" fill="#c6c6c6"/>
<g filter="url(#sh)"><path d="M307,192 H340 L348,200 V222 H316 L307,213Z" fill="#fff"/></g>
<g clip-path="url(#snip)"><use href="#pic" x="309" y="194" width="37" height="26"/></g>
<g filter="url(#sh)"><rect x="363" y="192" width="40" height="31" fill="#fff" stroke="#ddd" stroke-width="0.5"/></g>
<use href="#pic" x="366" y="196" width="34" height="23"/>
<g transform="rotate(-9 439 208)"><g filter="url(#sh)"><rect x="420" y="193" width="38" height="30" fill="#fff" stroke="#ccc" stroke-width="0.6"/></g>
<use href="#pic" x="423" y="196" width="32" height="23"/></g>
<ellipse cx="478" cy="218" rx="5" ry="2" fill="#ccc" filter="url(#soft)"/>
<rect x="474" y="192" width="40" height="30" fill="#fff" stroke="#bbb" stroke-width="0.6"/>
<use href="#pic" x="477" y="195" width="34" height="24"/>
<g filter="url(#sh)"><path d="M533,193 H567 L570,213 H530Z" fill="#fff" stroke="#bbb" stroke-width="0.6"/></g>
<use href="#pic" x="534" y="195" width="32" height="16"/>
<g filter="url(#soft)"><g clip-path="url(#ov2)"><use href="#pic" x="587" y="192" width="40" height="30"/></g></g>
<g filter="url(#sh2)"><g clip-path="url(#rr37)"><use href="#pic" x="643" y="192" width="42" height="31"/></g></g>
<!-- row 4 -->
<g filter="url(#sh2)"><g clip-path="url(#bev41)"><use href="#pic" x="305" y="248" width="45" height="29"/></g></g>
<g opacity="0.7" clip-path="url(#r42r)"><g transform="translate(0,546) scale(1,-1)"><use href="#pic" x="364" y="248" width="38" height="25"/></g></g>
<rect x="363" y="273" width="40" height="9" fill="url(#refl)"/>
<use href="#pic" x="364" y="248" width="38" height="25"/>
<g transform="rotate(5 440 264)"><g filter="url(#sh)"><rect x="421" y="249" width="38" height="30" fill="#fff" stroke="#ccc" stroke-width="0.6"/></g>
<use href="#pic" x="424" y="252" width="32" height="23"/></g>
<g opacity="0.4"><rect x="475" y="278" width="39" height="6" fill="#4a78b4"/></g>
<rect x="475" y="248" width="39" height="31" rx="4" fill="#3a3a3a"/>
<g clip-path="url(#rr44)"><use href="#pic" x="477" y="250" width="35" height="27"/></g>
<g opacity="0.35"><rect x="533" y="277" width="35" height="5" fill="#5e9c74"/></g>
<rect x="531" y="248" width="39" height="30" rx="4" fill="#fff" stroke="#999" stroke-width="0.8"/>
<g clip-path="url(#rr45)"><use href="#pic" x="533" y="250" width="35" height="26"/></g>
<g filter="url(#sh)"><rect x="587" y="248" width="41" height="31" rx="5" fill="#c3c3c3" stroke="#8a8a8a" stroke-width="0.8"/></g>
<g clip-path="url(#rr46)"><use href="#pic" x="591" y="252" width="33" height="24"/></g>
<g filter="url(#sh)"><ellipse cx="663" cy="264" rx="20.5" ry="16" fill="#c3c3c3" stroke="#8a8a8a" stroke-width="0.8"/></g>
<g clip-path="url(#ov3)"><use href="#pic" x="646" y="251" width="34" height="26"/></g>
<!-- grip -->
<g fill="#999"><rect x="704" y="297" width="2" height="2"/><rect x="701" y="300" width="2" height="2"/><rect x="704" y="300" width="2" height="2"/></g>
<!-- cursor -->
<path d="M326,201 L326,217 L329.5,213.5 L332.5,220 L335,219 L332,212.5 L337,212.5Z" fill="#fff" stroke="#000" stroke-width="1"/>
</svg>

</body></html>
